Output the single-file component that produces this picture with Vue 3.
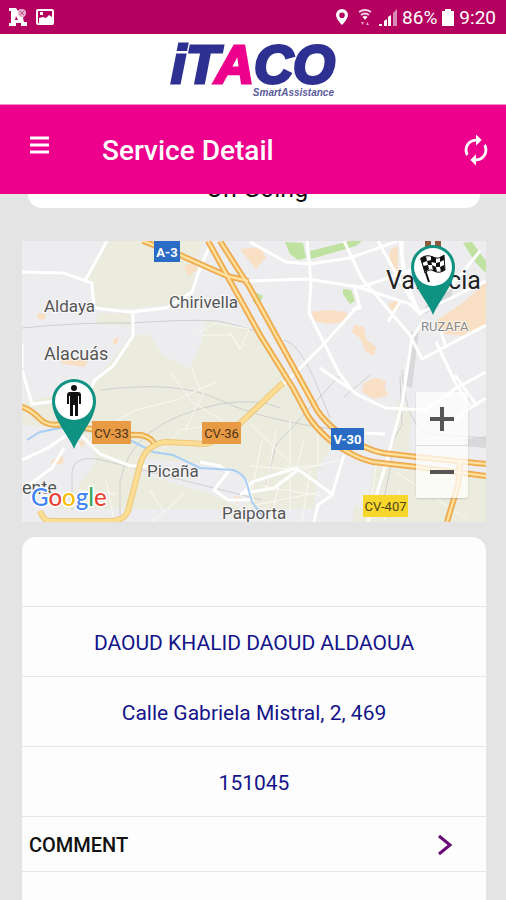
<template>
  <div class="app">
    <div class="status-bar">
      <div class="status-group">
        <svg class="status-icon" viewBox="0 0 18 18" aria-hidden="true">
          <path d="M0 0h7l2 3 2-2 4 1 2 3-3 5 1 4h3v4h-6v-3H7v3H0v-3h2V3H0z" fill="#fff" />
          <path d="M7 8l2 4H6z" fill="#b4005f" />
          <circle cx="13" cy="5" r="4" fill="#e7a9c8" />
          <path d="M11 3l4 4M15 3l-4 4" stroke="#c65a92" stroke-width="1" />
        </svg>
        <svg class="status-icon" viewBox="0 0 18 18" aria-hidden="true">
          <rect x="1" y="2" width="16" height="14" rx="1" fill="none" stroke="#fff" stroke-width="2" />
          <path d="M3 15V10l4-1 3 1 3-3 3 2v6z" fill="#fff" />
          <rect x="4" y="4" width="3" height="3" fill="#fff" />
        </svg>
      </div>
      <div class="status-group right">
        <svg width="14" height="18" viewBox="0 0 14 18" aria-hidden="true">
          <path d="M7 1a6 6 0 0 0-6 6c0 4 6 10 6 10s6-6 6-10a6 6 0 0 0-6-6zm0 3.400a2.800 2.800 0 1 1 0 5.600 2.800 2.800 0 0 1 0-5.600z" fill="#fff" fill-rule="evenodd" />
        </svg>
        <svg class="wifi" width="14" height="18" viewBox="0 0 14 18" aria-hidden="true">
          <path d="M1 4q6-4 12 0M3 7q4-3 8 0M5 9.500q2-1.500 4 0" fill="none" stroke="#f6d5e5" stroke-width="2" />
          <path d="M5 9h4l-2 3z" fill="#fff" />
          <path d="M3 14l1.500 3L6 14zM8 17l1.500-3 1.500 3z" fill="#e7a9c8" />
        </svg>
        <svg width="18" height="18" viewBox="0 0 18 18" aria-hidden="true">
          <path d="M0 18v-2h3v2zM5 18v-5l3-2v7zM9 18V9l3-2v11z" fill="#fff" />
          <path d="M14 18V5l4-4v17z" fill="#d78bb2" />
        </svg>
        <span>86%</span>
        <svg width="12" height="18" viewBox="0 0 12 18" aria-hidden="true">
          <path d="M0 3h3V1h6v2h3v15H0z" fill="#fff" />
        </svg>
        <span>9:20</span>
      </div>
    </div>

    <div class="brand">
      <svg width="180" height="70" viewBox="0 0 180 70" role="img" aria-label="iTACO SmartAssistance">
        <text class="logo" x="8" y="49">iT<tspan class="logo-pink">A</tspan>CO</text>
        <text class="logo-sub" x="171" y="62" text-anchor="end">SmartAssistance</text>
      </svg>
    </div>

    <header class="toolbar">
      <button type="button" class="icon-btn menu" aria-label="Menu">
        <svg width="20" height="18" viewBox="0 0 20 18">
          <path d="M1 2h19M1 9h19M1 16h19" stroke="#fff" stroke-width="3" />
        </svg>
      </button>
      <h1>Service Detail</h1>
      <button type="button" class="icon-btn" aria-label="Refresh">
        <svg width="34" height="34" viewBox="0 0 24 24" fill="#fff">
          <path d="M12 6v3l4-4-4-4v3c-4.420 0-8 3.580-8 8 0 1.570.46 3.030 1.240 4.260L6.700 14.800c-.45-.83-.7-1.790-.7-2.800 0-3.310 2.690-6 6-6zm6.760 1.740L17.300 9.200c.44.84.7 1.790.7 2.800 0 3.310-2.690 6-6 6v-3l-4 4 4 4v-3c4.420 0 8-3.580 8-8 0-1.570-.46-3.030-1.240-4.260z" />
        </svg>
      </button>
    </header>

    <main class="content">
      <!-- status card, scrolled under the toolbar -->
      <div class="scrolled">
        <div class="state-card">On Going</div>
      </div>

      <div class="map">
        <svg class="map-canvas" viewBox="22 241 464 281" role="img" aria-label="Map">
          <rect x="22" y="241" width="464" height="281" fill="#edecef" />

          <g fill="#ebebde">
            <path d="M107 241h98l-12 24 2 23-28 17-34 3-36 2-5-25-5-7z" />
            <path d="M97 313h34v13l-34-2z" />
            <path d="M132 335h18l12 20 28 14 12-28 4-20 20 2 36 10 28 50 20 42 22 20-14 24-4 40H22V402l42-8 28-10z" />
            <path d="M362 465l124 12v45H352z" />
            <path d="M398 400l14 10-4 42-18-2z" />
          </g>
          <g fill="#edecef">
            <path d="M22 425l45 2 24 14 5 20-18 26-38 35H22z" />
            <path d="M140 458l60 6 40 8 14 20-12 16-32-14-68-20z" />
            <path d="M336 458l38 8-8 44-30-12-4-16z" />
          </g>
          <g fill="#f9dfc3">
            <path d="M38 313l8 1-2 6-6-1zM113 340l6-4-2 8-4 1zM60 357l28 4-4 6-22-3zM184 266l10-4 4 8-10 6zM240 249l20-2 6 10-10 12z" />
            <path d="M312 312l16-2 18 2 2 10-20 2-14-3zM354 325l10 2 2 12 10 8-2 9-8-4-6-14-8-6zM366 382l8-4 12 3-2 8-18-3zM364 383l16-5 8 17-14 4-12-7z" />
            <path d="M390 250l8-4v24l-8-2zM434 322l30-20 22-20v42l-20 12-22-2zM388 304l10-4 2 8-8 3zM52 460l10-5 2 8-12 3zM78 440l8 2-4 6zM233 496l10 2-6 6z" />
          </g>
          <g fill="#bfe2a0">
            <path d="M285 242l18 1 3 15-8 2-8-6zM310 251l20-5 20-5h12l-6 5-45 13zM463 243l9-1 14 19v12l-10-10zM343 289l8 1 4 11-5 3-7-10zM250 290l13 6-4 9-5-2z" />
          </g>
          <path d="M411 333l8-3-7 58-6-2zM462 440l24-4v12l-22-2zM425 306l28-18-2 12-26 14z" fill="#d9d9dc" />

          <g class="rail">
            <path d="M22 328q60-6 110-5 60-4 86-2 20 4 44 12M100 390q80-10 120 10t120 30" />
            <path d="M120 522v-40q10-60 100-78 40-6 60 4M72 510v-38q2-18 30-12l160 40" />
            <path d="M284 340q16 4 34 48l12 30M370 375l-26 22M340 375l-64 70-10 40M400 375l2 50q-16 24-10 34l-10 50M402 370q4 60 30 64l54 4" />
          </g>

          <g class="road">
            <path d="M22 272l42 1 28 10 2 25 36 4 36-4 26-16 8-24 12-26M107 241l-22 40M133 310v26l-20 30-18 14-10 20M22 370l10 34 50-6M22 344v24" />
            <path d="M250 242l36 20 24 2 40-6 48-17M307 241l4 40-2 32 14 28 16 32 12 16M250 281l58-2 50 8 52 17 10 10" />
            <path d="M344 241l18 38 14 16 34 40 12 24 64-34M378 241l22 40 20 32 66-32M436 342l20 42 14 22M358 288l60-20M352 310l8-2-6-24M358 306l-36 40-52 52M402 241v30M400 302l-12 20M424 320l-12 18-10 66-16 60-18 58" />
            <path d="M400 241l6 40 14 34M480 251l-28 34M486 372l-30 16-30 22-40-2-26-12-40-28M446 348l-6-20M365 433l20 1M455 375l20 28M486 398l-22 14-10 10" />
            <path d="M80 434l20 20 30 12h20M22 460l26-12 20-14M22 490l30-22 12-20M200 462l20 4 8 6-14 18 14 10h24l-6-20M240 494l34-6 24-18M344 455l-12 40-14 10-4 17M332 494l-36-26-44 14-8 10" />
          </g>
          <g class="lane">
            <path d="M195 335l20-12 34 6-8 20-10-14h-30M230 332l10 18M205 390l-20 40M170 372l22 30 30 18M100 430l36-20 40-10 40-18M160 452l20-22 26-4M192 368l8 22" />
            <path d="M250 424l46 44M262 440l-10 50M276 430l-10 60M290 420v90M304 440l-8 30M318 425v40l-40 4M240 508l80-16M262 486l60 10M280 480l-10 42M310 470l-8 52M250 466l50 4 40-10" />
            <path d="M106 480l8 40M150 490l14 22-12 10M164 512l20-18M76 490l40 4M376 466l-8 56M396 472l70 46M400 490l-16 30" />
          </g>

          <path class="river" d="M27 440l13-8 20-4 37 4 33 8 23 12 20 3 27 13 33 2q12 4 14 14l5 18 12 16" />

          <g class="yellow-edge"><path d="M40 511q4 10 10 10h60q14 0 18-10l12-46q4-14 12-18 6-5 16-5l37 2q18-4 28-14l50-47" /></g>
          <g class="yellow"><path d="M40 511q4 10 10 10h60q14 0 18-10l12-46q4-14 12-18 6-5 16-5l37 2q18-4 28-14l50-47" /></g>

          <g v-for="layer in ['edge', 'fill', 'line']" :key="layer" :class="['highway', layer]">
            <path v-for="d in highways" :key="d" :d="d" />
          </g>

          <!-- road numbers -->
          <g v-for="s in shields" :key="s.text">
            <rect :x="s.x" :y="s.y" :width="s.w" :height="s.h" :fill="s.bg" />
            <text
              :x="s.x + s.w / 2"
              :y="s.y + s.h / 2 + 5"
              :fill="s.color"
              :font-weight="s.weight"
              font-size="13"
              text-anchor="middle"
            >{{ s.text }}</text>
          </g>

          <text
            v-for="p in places"
            :key="p.name"
            class="place"
            :x="p.x"
            :y="p.y"
            :font-size="p.size"
            :fill="p.color"
          >{{ p.name }}</text>

          <text class="google" x="31" y="506">
            <tspan v-for="(l, i) in google" :key="i" :fill="l.color">{{ l.char }}</tspan>
          </text>

          <!-- destination -->
          <g transform="translate(433 267)">
            <path d="M-8-18v-8h6v6h4v-6h6v8" fill="#8a5a3c" />
            <path class="pin" :d="pin" />
            <circle r="19" fill="#fff" />
            <path d="M-12-9l8 24" stroke="#111" stroke-width="2" />
            <path d="M-12-9q6-4 12-1t11-2l1 15q-6 4-11 1t-9 2z" fill="#fff" stroke="#111" stroke-width="1" />
            <path d="M-12-9l5-2 1 5-5 2zM-2-11l5 2v5l-5-1zM7-10l4-2v5l-4 2zM-6-6l4-1 1 5-4 0zM3-4l4-1v5l-4 0zM-10-1l5-1 1 4-4 3zM-1-2l4 2 1 5-4-1zM7 0l4-2 1 5-4 2z" fill="#111" />
          </g>
          <!-- client -->
          <g transform="translate(74 401)">
            <path class="pin" :d="pin" />
            <circle r="19" fill="#fff" />
            <circle cy="-13" r="3" fill="#111" />
            <path d="M-4-9h8q3 0 3 3V3H5V-5H4V15H1V4h-2v11h-3V-5h-1V3h-2V-6q0-3 3-3z" fill="#111" />
          </g>
        </svg>

        <div class="zoom">
          <button type="button" aria-label="Zoom in">
            <svg width="24" height="24" viewBox="0 0 24 24"><path d="M0 12h24M12 0v24" stroke="#555" stroke-width="4" /></svg>
          </button>
          <button type="button" aria-label="Zoom out">
            <svg width="24" height="24" viewBox="0 0 24 24"><path d="M0 12h24" stroke="#555" stroke-width="4" /></svg>
          </button>
        </div>
      </div>

      <section class="detail">
        <div class="row"></div>
        <div v-for="row in rows" :key="row" class="row">{{ row }}</div>
        <button type="button" class="comment">
          <span>COMMENT</span>
          <svg width="16" height="22" viewBox="0 0 16 22">
            <path d="M2 2l11 9-11 9" fill="none" stroke="#6a0a78" stroke-width="3" />
          </svg>
        </button>
        <div class="rest"></div>
      </section>
    </main>
  </div>
</template>

<script setup>
import { ref } from "vue";

const rows = ref([
  "DAOUD KHALID DAOUD ALDAOUA",
  "Calle Gabriela Mistral, 2, 469",
  "151045",
]);

const pin = "M0 48C-4 36-22 18-22 0a22 22 0 0 1 44 0C22 18 4 36 0 48z";

const highways = [
  "M208 241l52 94 33 53 15 28q16 24 42 37 10 6 23 9l44 5 69 9",
  "M220 241l30 47 55 100 12 22q16 24 48 37 8 4 18 6l34 4 69 7",
  "M143 241l37 14 47 21 21 5",
  "M22 407q8 2 18 12 8 8 23 5l34 6 33 5q18-2 24 8",
  "M460 462l-2 23-11 37",
];

const shields = [
  { text: "A-3", x: 154, y: 241, w: 26, h: 21, bg: "#2a6cc4", color: "#fff", weight: 700 },
  { text: "CV-33", x: 92, y: 421, w: 39, h: 23, bg: "#e99a45", color: "#4d3518", weight: 400 },
  { text: "CV-36", x: 202, y: 422, w: 39, h: 22, bg: "#e99a45", color: "#4d3518", weight: 400 },
  { text: "V-30", x: 331, y: 428, w: 33, h: 22, bg: "#2a6cc4", color: "#fff", weight: 700 },
  { text: "CV-407", x: 363, y: 495, w: 45, h: 22, bg: "#f8d62c", color: "#4d4418", weight: 400 },
];

const places = [
  { name: "Aldaya", x: 44, y: 312, size: 17, color: "#555" },
  { name: "Alacuás", x: 44, y: 360, size: 18, color: "#555" },
  { name: "Chirivella", x: 169, y: 308, size: 17, color: "#555" },
  { name: "Valencia", x: 386, y: 289, size: 25, color: "#222" },
  { name: "RUZAFA", x: 421, y: 331, size: 13, color: "#888" },
  { name: "Picaña", x: 147, y: 477, size: 17, color: "#555" },
  { name: "Paiporta", x: 222, y: 519, size: 17, color: "#555" },
  { name: "ente", x: 22, y: 494, size: 18, color: "#555" },
];

const google = [
  { char: "G", color: "#4285f4" },
  { char: "o", color: "#ea4335" },
  { char: "o", color: "#fbbc05" },
  { char: "g", color: "#4285f4" },
  { char: "l", color: "#34a853" },
  { char: "e", color: "#ea4335" },
];
</script>

<style>
body {
  margin: 0;
  background: #e4e4e4;
}
</style>

<style scoped>
.app {
  display: flex;
  flex-direction: column;
  min-height: 100vh;
  font-family: Roboto, "Liberation Sans", sans-serif;
  background: #e4e4e4;
}

.status-bar {
  display: flex;
  align-items: center;
  justify-content: space-between;
  height: 34px;
  padding: 0 10px 0 9px;
  box-sizing: border-box;
  background: #b4005f;
  color: #fff;
  font-size: 19px;
}

.status-group {
  display: flex;
  align-items: center;
  gap: 9px;
}

.status-group.right {
  gap: 5px;
}

.status-icon {
  width: 18px;
  height: 18px;
}

.wifi {
  margin: 0 2px 0 4px;
}

.brand {
  display: flex;
  justify-content: center;
  height: 70px;
  background: #fff;
}

.brand svg {
  overflow: visible;
}

.logo {
  font: italic 700 54px "Liberation Sans", Arial, sans-serif;
  fill: #2e3192;
  stroke: #2e3192;
  stroke-width: 3;
}

.logo-pink {
  fill: #ec008c;
  stroke: #ec008c;
}

.logo-sub {
  font: italic 700 10px "Liberation Sans", Arial, sans-serif;
  fill: #5a5a9c;
}

.toolbar {
  display: flex;
  align-items: center;
  height: 90px;
  padding: 0 13px 0 29px;
  box-sizing: border-box;
  border-top: 1px solid #f58bc5;
  background: #ec008c;
  color: #fff;
}

.toolbar h1 {
  flex: 1;
  margin: 0;
  padding-top: 2px;
  font-size: 28px;
  font-weight: 500;
}

.icon-btn {
  display: flex;
  padding: 0;
  border: 0;
  background: none;
}

.menu {
  width: 73px;
  padding-bottom: 10px;
}

.content {
  flex: 1;
  display: flex;
  flex-direction: column;
  padding: 0 20px 0 22px;
}

.scrolled {
  display: flex;
  align-items: flex-end;
  height: 14px;
  padding: 0 6px;
  overflow: hidden;
}

.state-card {
  flex: 1;
  padding: 20px 0 5px 6px;
  border-radius: 14px;
  background: #fff;
  color: #111;
  font-size: 25px;
  line-height: 28px;
  text-align: center;
}

.map {
  position: relative;
  margin-top: 33px;
}

.map-canvas {
  display: block;
  width: 100%;
  height: auto;
}

.rail path {
  fill: none;
  stroke: #cfcfd0;
  stroke-width: 1;
}

.road path {
  fill: none;
  stroke: #fff;
  stroke-width: 3;
}

.lane path {
  fill: none;
  stroke: #faf9f3;
  stroke-width: 1;
}

.river {
  fill: none;
  stroke: #a8cff5;
  stroke-width: 2;
}

.yellow-edge path {
  fill: none;
  stroke: #eec77a;
  stroke-width: 6;
}

.yellow path {
  fill: none;
  stroke: #fbdd94;
  stroke-width: 4;
}

.highway path {
  fill: none;
}

.highway.edge path {
  stroke: #e9a64c;
  stroke-width: 6;
}

.highway.fill path {
  stroke: #f6b657;
  stroke-width: 4;
}

.highway.line path {
  stroke: #ffe3a3;
  stroke-width: 2;
}

.place {
  stroke: #fff;
  stroke-width: 2;
  stroke-opacity: 0.7;
  paint-order: stroke;
}

.google {
  font: 500 24px Lato, sans-serif;
  stroke: #fff;
  stroke-width: 3;
  paint-order: stroke;
}

.pin {
  fill: #0f9282;
}

.zoom {
  position: absolute;
  right: 18px;
  bottom: 24px;
  display: flex;
  flex-direction: column;
  width: 52px;
  border-radius: 2px;
  background: rgba(255, 255, 255, 0.75);
  box-shadow: 0 1px 2px rgba(0, 0, 0, 0.15);
}

.zoom button {
  display: flex;
  align-items: center;
  justify-content: center;
  height: 53px;
  padding: 0;
  border: 0;
  background: none;
}

.zoom button + button {
  border-top: 1px solid #dcdcdc;
}

.detail {
  flex: 1;
  display: flex;
  flex-direction: column;
  margin-top: 15px;
  border-radius: 14px 14px 0 0;
  background: #fdfdfd;
}

.row {
  display: flex;
  align-items: center;
  justify-content: center;
  min-height: 70px;
  padding-top: 3px;
  box-sizing: border-box;
  border-bottom: 1px solid #e6e6e6;
  color: #14148a;
  font-size: 21px;
}

.comment {
  display: flex;
  align-items: center;
  justify-content: space-between;
  height: 55px;
  padding: 2px 33px 0 7px;
  border: 0;
  border-bottom: 1px solid #e6e6e6;
  background: none;
  color: #111;
  font-family: inherit;
  font-size: 20px;
  font-weight: 500;
}

.rest {
  flex: 1;
}
</style>
